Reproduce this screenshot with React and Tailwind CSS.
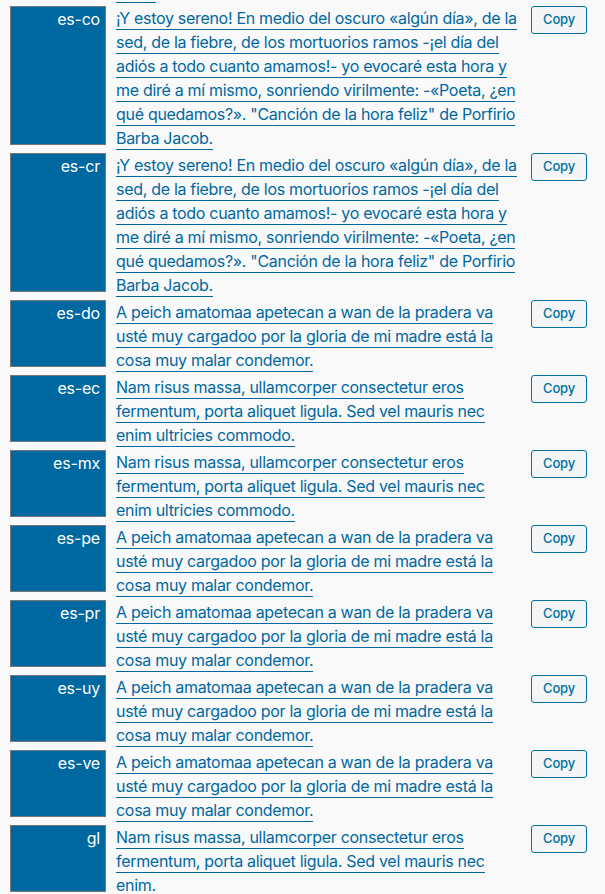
import React from "react";

const POEM =
  "¡Y estoy sereno! En medio del oscuro «algún día», de la sed, de la fiebre, de los mortuorios ramos -¡el día del adiós a todo cuanto amamos!- yo evocaré esta hora y me diré a mí mismo, sonriendo virilmente: -«Poeta, ¿en qué quedamos?». \"Canción de la hora feliz\" de Porfirio Barba Jacob.";
const PEICH =
  "A peich amatomaa apetecan a wan de la pradera va usté muy cargadoo por la gloria de mi madre está la cosa muy malar condemor.";
const NAM =
  "Nam risus massa, ullamcorper consectetur eros fermentum, porta aliquet ligula. Sed vel mauris nec enim ultricies commodo.";
const NAM_SHORT =
  "Nam risus massa, ullamcorper consectetur eros fermentum, porta aliquet ligula. Sed vel mauris nec enim.";

const rows = [
  ["es-cl", NAM_SHORT],
  ["es-co", POEM],
  ["es-cr", POEM],
  ["es-do", PEICH],
  ["es-ec", NAM],
  ["es-mx", NAM],
  ["es-pe", PEICH],
  ["es-pr", PEICH],
  ["es-uy", PEICH],
  ["es-ve", PEICH],
  ["gl", NAM_SHORT],
];

function Row({ label, text }) {
  return (
    <div className="flex items-stretch pb-[3px]">
      <div className="ml-[10px] mb-[5px] w-[96px] shrink-0 border border-[#787878] bg-[#0068a0] pr-[5px] text-right text-[16px] leading-[24px] tracking-[-0.2px] text-white">
        {label}
      </div>
      <div className="ml-[10px] w-[406px] shrink-0 text-[16px] leading-[24px] tracking-[-0.3px] text-[#0068a0]">
        <span className="border-b border-[#0068a0] pb-[1px]">{text}</span>
      </div>
      <div className="ml-[9px]">
        <button className="h-[28px] w-[56px] rounded-[3px] border border-[#0071a1] bg-[#f3f5f6] text-[13px] font-medium tracking-[-0.2px] text-[#0071a1]">
          Copy
        </button>
      </div>
    </div>
  );
}

export default function App() {
  return (
    <div
      className="h-[894px] w-[605px] overflow-hidden bg-[#f9f9f9]"
      style={{ fontFamily: "Inter, Roboto, 'Liberation Sans', sans-serif" }}
    >
      <div className="-mt-[69px]">
        {rows.map(([l, t]) => (
          <Row key={l} label={l} text={t} />
        ))}
      </div>
    </div>
  );
}
